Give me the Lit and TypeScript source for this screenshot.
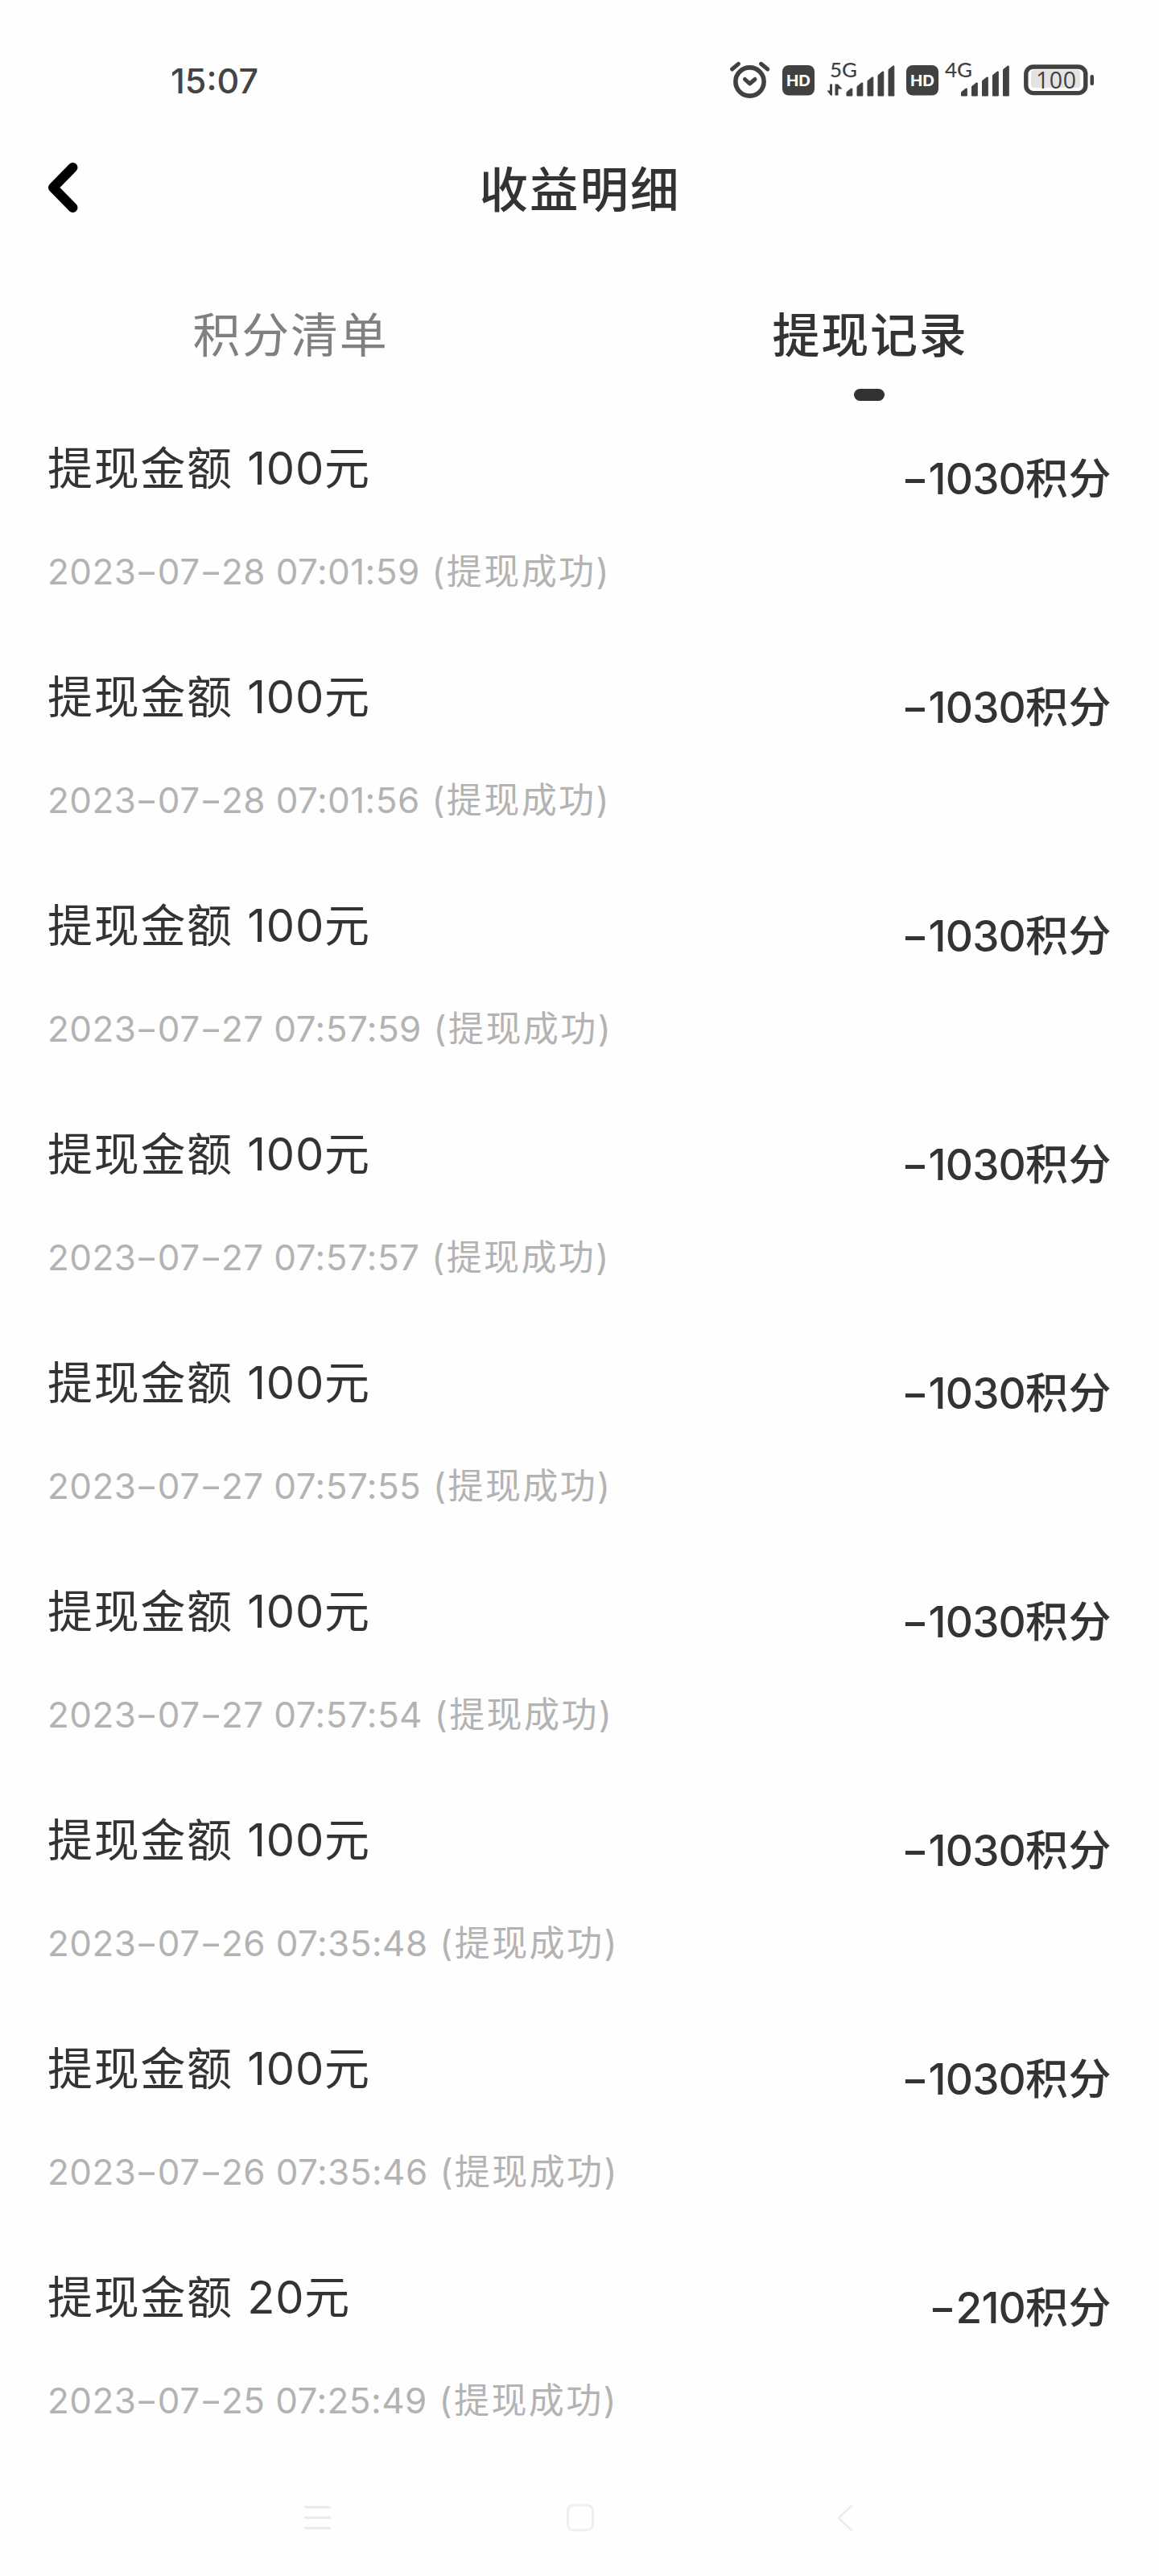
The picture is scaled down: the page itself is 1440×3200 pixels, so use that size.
import { LitElement, html, css, svg } from "lit";
import { customElement, property } from "lit/decorators.js";

interface RecordItem {
  money: string;
  time: string;
  points: string;
}

const RECORDS: RecordItem[] = [
  { money: "100", time: "2023-07-28 07:01:59", points: "1030" },
  { money: "100", time: "2023-07-28 07:01:56", points: "1030" },
  { money: "100", time: "2023-07-27 07:57:59", points: "1030" },
  { money: "100", time: "2023-07-27 07:57:57", points: "1030" },
  { money: "100", time: "2023-07-27 07:57:55", points: "1030" },
  { money: "100", time: "2023-07-27 07:57:54", points: "1030" },
  { money: "100", time: "2023-07-26 07:35:48", points: "1030" },
  { money: "100", time: "2023-07-26 07:35:46", points: "1030" },
  { money: "20", time: "2023-07-25 07:25:49", points: "210" },
];

const BAR_TOPS = [110, 103, 96, 89, 82];

const signalBars = (x: number) =>
  BAR_TOPS.map((top, i) => {
    const l = x + i * 13;
    return svg`<path d="M${l} ${top + 4.5} L${l + 5.5} ${top} H${l + 6.8} V119 H${l} Z"
      fill="#414141" stroke="#414141" stroke-width="1" stroke-linejoin="round"/>`;
  });

@customElement("status-bar")
export class StatusBar extends LitElement {
  static styles = css`
    :host {
      display: flex;
      justify-content: space-between;
      align-items: flex-start;
      height: 124px;
      padding: 60px 80px 0 212px;
      box-sizing: border-box;
      color: #444;
    }
    .clock {
      margin-top: 15px;
      font-size: 43px;
      font-weight: 500;
      line-height: 50px;
      letter-spacing: 0;
    }
    .icons {
      display: flex;
    }
    svg {
      display: block;
    }
    .hd {
      font: 700 18.5px Inter, sans-serif;
    }
    .net {
      font: 500 24.5px Lato, sans-serif;
    }
    .level {
      font: 500 28.5px "Open Sans", Inter, sans-serif;
    }
  `;

  private hd(x: number) {
    return html`<svg width="48" height="64" viewBox="${x} 60 48 64">
      <rect x=${x + 4} y="81" width="40" height="37.5" rx="8" fill="#414141" />
      <text class="hd" x=${x + 24} y="106.5" text-anchor="middle" textLength="30" lengthAdjust="spacingAndGlyphs" fill="#fff">HD</text>
    </svg>`;
  }

  render() {
    return html`
      <div class="clock">15:07</div>
      <div class="icons">
        <svg width="64" height="64" viewBox="904 60 64 64" fill="none" stroke="#414141" stroke-linecap="round" stroke-linejoin="round">
          <circle cx="931.5" cy="101.5" r="17.6" stroke-width="5.6" />
          <path d="M925.5 98.5 L931.5 104 L938 98.5" stroke-width="5" />
          <path d="M909.5 86 L917.5 79.3 M945.5 79.3 L953.8 86" stroke-width="5" />
        </svg>
        ${this.hd(968)}
        <svg width="106" height="64" viewBox="1016 60 106 64">
          <text class="net" x="1031" y="96" textLength="34" lengthAdjust="spacingAndGlyphs" fill="#414141">5G</text>
          <path d="M1034 104.5 V118.5 H1032 L1027.5 112.5 H1031 V104.5 Z M1037.5 118.5 V104.5 H1041 L1046.5 110.5 H1041.5 V118.5 Z" fill="#414141" />
          ${signalBars(1052)}
        </svg>
        ${this.hd(1122)}
        <svg width="92" height="64" viewBox="1170 60 92 64">
          <text class="net" x="1174" y="96" textLength="34" lengthAdjust="spacingAndGlyphs" fill="#414141">4G</text>
          ${signalBars(1194.5)}
        </svg>
        <svg width="98" height="64" viewBox="1262 60 98 64">
          <rect x="1281" y="87" width="61" height="22" rx="3" fill="#e3e3e3" />
          <rect x="1274.8" y="83" width="74" height="32.6" rx="9" fill="none" stroke="#414141" stroke-width="5.4" />
          <text class="level" x="1312" y="110" text-anchor="middle" textLength="50" fill="#414141">100</text>
          <rect x="1354.5" y="93" width="4.5" height="13" rx="2" fill="#414141" />
        </svg>
      </div>
    `;
  }
}

@customElement("record-row")
export class RecordRow extends LitElement {
  @property({ attribute: false }) item!: RecordItem;

  static styles = css`
    :host {
      display: flex;
      justify-content: space-between;
      height: 284px;
      padding: 38px 59px 0 59px;
      box-sizing: border-box;
    }
    .info {
      display: flex;
      flex-direction: column;
      gap: 58px;
    }
    .title {
      font-size: 56px;
      line-height: 80px;
      letter-spacing: 1.7px;
      color: #333;
    }
    .money {
      letter-spacing: 0.8px;
    }
    .time {
      font-size: 44px;
      line-height: 60px;
      letter-spacing: 2.4px;
      color: #b3b3b3;
      white-space: nowrap;
    }
    .stamp {
      letter-spacing: 0.45px;
    }
    .points {
      margin-top: 13px;
      font-size: 53px;
      font-weight: 500;
      line-height: 80px;
      letter-spacing: 0.5px;
      color: #333;
    }
    .count {
      letter-spacing: -0.8px;
    }
    .dash {
      display: inline-block;
      width: 0.6em;
      text-align: center;
      letter-spacing: 0;
      transform: scaleX(1.4);
    }
    .points .dash {
      width: 0.64em;
    }
  `;

  render() {
    const { money, time, points } = this.item;
    const parts = time.split("-");
    return html`
      <div class="info">
        <div class="title">提现金额 <span class="money">${money}</span>元</div>
        <div class="time"><span class="stamp">${parts.map((p, i) => (i ? html`<span class="dash">-</span>${p}` : p))}</span> (提现成功)</div>
      </div>
      <div class="points"><span class="dash">-</span><span class="count">${points}</span>积分</div>
    `;
  }
}

@customElement("app-root")
export class AppRoot extends LitElement {
  static styles = css`
    :host {
      display: flex;
      flex-direction: column;
      width: 1440px;
      height: 3200px;
      box-sizing: border-box;
      background: #fefefe;
      color: #333;
      font-family: Inter, "Noto Sans CJK SC", sans-serif;
    }
    .header {
      display: grid;
      grid-template-columns: 160px 1fr 160px;
      align-items: center;
      height: 218px;
    }
    .back {
      display: block;
      margin-left: 56px;
    }
    .heading {
      padding: 5px 0 0 1px;
      text-align: center;
      font-size: 60.5px;
      font-weight: 500;
      line-height: 90px;
      letter-spacing: 2px;
    }
    .tabs {
      display: grid;
      grid-template-columns: 1fr 1fr;
      height: 162px;
    }
    .tab {
      display: flex;
      flex-direction: column;
      align-items: center;
      padding-top: 30px;
      gap: 21px;
      font-size: 59px;
      line-height: 90px;
      letter-spacing: 1.7px;
      text-indent: 2px;
      color: #808080;
    }
    .tab.active {
      color: #333;
      font-weight: 500;
    }
    .pill {
      width: 38px;
      height: 15px;
      border-radius: 8px;
      background: #333;
    }
    .list {
      display: flex;
      flex-direction: column;
    }
    .nav {
      display: grid;
      grid-template-columns: 326px 338px 24px;
      padding: 47px 0 0 374px;
    }
    .nav svg {
      display: block;
    }
  `;

  render() {
    return html`
      <status-bar></status-bar>
      <div class="header">
        <svg class="back" width="48" height="72" viewBox="56 197 48 72" fill="none" stroke="#000" stroke-width="12" stroke-linecap="round" stroke-linejoin="round">
          <path d="M90.5 208 L66 233 L90.5 258" />
        </svg>
        <div class="heading">收益明细</div>
      </div>
      <div class="tabs">
        <div class="tab">积分清单</div>
        <div class="tab active">提现记录<span class="pill"></span></div>
      </div>
      <div class="list">${RECORDS.map((r) => html`<record-row .item=${r}></record-row>`)}</div>
      <div class="nav">
        <svg width="42" height="40" viewBox="374 3107 42 40" stroke="#ebebeb" stroke-width="3">
          <path d="M378 3114.5 H411 M378 3127.5 H411 M378 3140.5 H411" />
        </svg>
        <svg width="42" height="40" viewBox="700 3107 42 40" fill="none" stroke="#efefef" stroke-width="3">
          <rect x="705.5" y="3112" width="31" height="31" rx="7" />
        </svg>
        <svg width="24" height="40" viewBox="1038 3107 24 40" fill="none" stroke="#ebebeb" stroke-width="2.5">
          <path d="M1059 3112 L1042 3128 L1059 3144" />
        </svg>
      </div>
    `;
  }
}
